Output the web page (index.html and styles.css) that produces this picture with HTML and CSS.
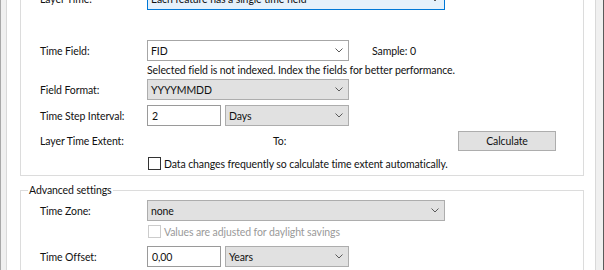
FILE: index.html
```html
<!DOCTYPE html>
<html>
<head>
<meta charset="utf-8">
<link rel="stylesheet" href="styles.css">
</head>
<body>
<div class="window">
  <div class="page">
    <div class="group group--time">
      <div class="row row--layer">
        <span class="label">Layer Time:</span>
        <div class="combo combo--focus combo--wide"><span class="combo__text">Each feature has a single time field</span><svg class="chev" width="8" height="5" viewBox="0 0 8 5"><path d="M0.5 0.5 L4 4 L7.5 0.5" fill="none" stroke="#5a5a5a" stroke-width="1"/></svg></div>
      </div>
      <div class="row row--field">
        <span class="label">Time Field:</span>
        <div class="combo combo--edit combo--mid"><span class="combo__text">FID</span><svg class="chev" width="8" height="5" viewBox="0 0 8 5"><path d="M0.5 0.5 L4 4 L7.5 0.5" fill="none" stroke="#5a5a5a" stroke-width="1"/></svg></div>
        <span class="sample">Sample: 0</span>
      </div>
      <div class="hint">Selected field is not indexed. Index the fields for better performance.</div>
      <div class="row row--format">
        <span class="label">Field Format:</span>
        <div class="combo combo--list combo--mid"><span class="combo__text">YYYYMMDD</span><svg class="chev" width="8" height="5" viewBox="0 0 8 5"><path d="M0.5 0.5 L4 4 L7.5 0.5" fill="none" stroke="#5a5a5a" stroke-width="1"/></svg></div>
      </div>
      <div class="row row--step">
        <span class="label">Time Step Interval:</span>
        <div class="textbox">2</div>
        <div class="combo combo--list combo--unit"><span class="combo__text">Days</span><svg class="chev" width="8" height="5" viewBox="0 0 8 5"><path d="M0.5 0.5 L4 4 L7.5 0.5" fill="none" stroke="#5a5a5a" stroke-width="1"/></svg></div>
      </div>
      <div class="row row--extent">
        <span class="label">Layer Time Extent:</span>
        <span class="to">To:</span>
        <div class="button">Calculate</div>
      </div>
      <div class="check check--auto">
        <span class="check__box"></span>
        <span class="check__text">Data changes frequently so calculate time extent automatically.</span>
      </div>
    </div>
    <fieldset class="group group--adv">
      <legend class="group__legend">Advanced settings</legend>
      <div class="row row--zone">
        <span class="label">Time Zone:</span>
        <div class="combo combo--list combo--wide"><span class="combo__text">none</span><svg class="chev" width="8" height="5" viewBox="0 0 8 5"><path d="M0.5 0.5 L4 4 L7.5 0.5" fill="none" stroke="#5a5a5a" stroke-width="1"/></svg></div>
      </div>
      <div class="check check--dst">
        <span class="check__box check__box--disabled"></span>
        <span class="check__text check__text--disabled">Values are adjusted for daylight savings</span>
      </div>
      <div class="row row--offset">
        <span class="label">Time Offset:</span>
        <div class="textbox">0,00</div>
        <div class="combo combo--list combo--unit"><span class="combo__text">Years</span><svg class="chev" width="8" height="5" viewBox="0 0 8 5"><path d="M0.5 0.5 L4 4 L7.5 0.5" fill="none" stroke="#5a5a5a" stroke-width="1"/></svg></div>
      </div>
    </fieldset>
  </div>
</div>
</body>
</html>
```
FILE: styles.css
```css
* { box-sizing: border-box; }
html, body { margin: 0; padding: 0; background: #f0f0f0; }
body {
  font-family: Lato, "Noto Sans", sans-serif;
  font-size: 10.5px;
  letter-spacing: -0.1px;
  color: #111;
}
.window {
  width: 604px;
  height: 270px;
  overflow: hidden;
  display: flex;
  background: #f0f0f0;
  border-left: 1px solid #a8a8a8;
  border-right: 1px solid #5a5a5a;
  padding: 0 7px 0 5px;
}
.page {
  width: 590px;
  flex: none;
  height: 100%;
  background: #fff;
  border-left: 1px solid #d9d9d9;
  border-right: 1px solid #d9d9d9;
  padding: 0 11px 0 13px;
  overflow: hidden;
}
.group {
  border: 1px solid #dcdcdc;
  margin: 0;
  min-inline-size: 0;
}
.group--time {
  margin-top: -30px;
  padding: 17px 0 5px 19px;
}
.group--adv {
  margin-top: 6px;
  padding: 0 0 12px 19px;
}
.group__legend {
  padding: 0 1px;
  margin-left: -12px;
  line-height: 16px;
  height: 16px;
}
.row {
  display: flex;
  align-items: center;
  height: 21px;
}
.row--layer { height: 22px; }
.row--field { margin-top: 30px; }
.row--format { margin-top: 1px; }
.row--step { margin-top: 5px; }
.row--extent { margin-top: 5px; height: 20px; }
.row--zone { margin-top: 2px; }
.row--offset { margin-top: 8px; }
.label {
  width: 107px;
  flex: none;
  white-space: nowrap;
}
.combo {
  height: 100%;
  display: flex;
  align-items: center;
  border: 1px solid #adadad;
  padding: 0 0 0 3px;
  white-space: nowrap;
}
.combo__text { flex: 1; line-height: 16px; }
.chev { flex: none; margin-right: 5px; }
.combo--focus { background: #e5f1fb; border-color: #0078d7; }
.combo--edit { background: #fff; border-color: #a6a6a6; }
.combo--list { background: #e1e1e1; }
.combo--wide { width: 298px; }
.combo--mid { width: 202px; }
.combo--unit { width: 124px; margin-left: 4px; }
.textbox {
  width: 74px;
  height: 100%;
  border: 1px solid #9a9a9a;
  background: #fff;
  padding: 0 0 0 4px;
  display: flex;
  align-items: center;
}
.sample { margin-left: 23px; }
.hint {
  margin-top: 1px;
  height: 16px;
  line-height: 16px;
  padding-left: 107px;
  white-space: nowrap;
}
.to { margin-left: 126px; }
.button {
  margin-left: auto;
  margin-right: 27px;
  width: 98px;
  height: 100%;
  background: #e1e1e1;
  border: 1px solid #adadad;
  display: flex;
  align-items: center;
  justify-content: center;
}
.check {
  display: flex;
  align-items: center;
  height: 13px;
  padding-left: 108px;
  white-space: nowrap;
}
.check--auto { margin-top: 6px; }
.check--dst { margin-top: 4px; }
.check__box {
  width: 13px;
  height: 13px;
  flex: none;
  border: 1px solid #333;
  background: #fff;
}
.check__box--disabled { border-color: #cccccc; }
.check__text { margin-left: 3px; line-height: 16px; }
.check__text--disabled { color: #9a9a9a; }
```
